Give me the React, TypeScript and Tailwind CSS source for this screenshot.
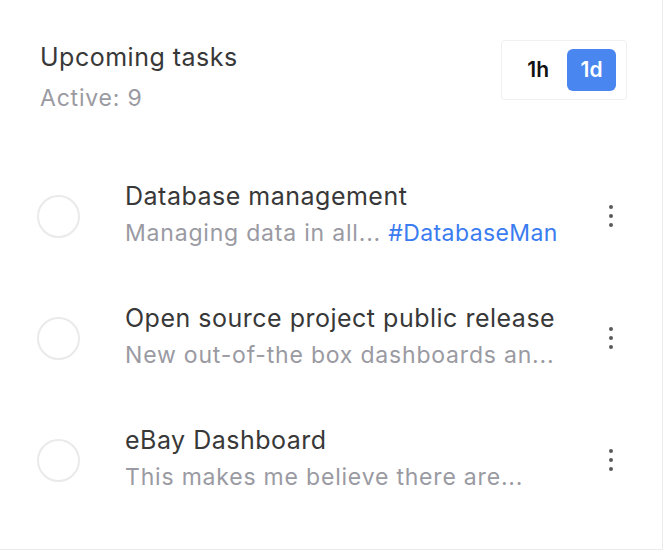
import React from "react";

const tasks = [
  {
    title: "Database management",
    sub: "Managing data in all... ",
    tag: "#DatabaseMan",
  },
  { title: "Open source project public release", sub: "New out-of-the box dashboards an...", tag: "" },
  { title: "eBay Dashboard", sub: "This makes me believe there are...", tag: "" },
];

function Kebab() {
  return (
    <div className="flex flex-col items-center gap-[5px] w-[8px]">
      <span className="block w-[4px] h-[4px] rounded-full bg-[#5a5a5a]" />
      <span className="block w-[4px] h-[4px] rounded-full bg-[#5a5a5a]" />
      <span className="block w-[4px] h-[4px] rounded-full bg-[#5a5a5a]" />
    </div>
  );
}

export default function App() {
  return (
    <div className="w-[666px] h-[554px] bg-white font-['Inter',sans-serif]">
      <div className="w-[663px] h-[550px] bg-white border-r border-b border-[#ececec] flex flex-col">
        <div className="h-[155px] flex items-start justify-between pl-[40px] pr-[35px] pt-[40px]">
          <div className="flex flex-col">
            <div className="text-[25px] leading-[34px] text-[#383838] tracking-[0.5px]">Upcoming tasks</div>
            <div className="text-[23px] leading-[30px] text-[#9a9aa2] tracking-[0.8px] mt-[9px]">Active: 9</div>
          </div>
          <div className="w-[126px] h-[60px] rounded-[4px] border border-[#f0f0f0] flex items-center justify-end pr-[10px] gap-[18px]">
            <span className="text-[21px] font-semibold text-[#111111]">1h</span>
            <span className="w-[49px] h-[42px] rounded-[6px] bg-[#4a86f0] text-white text-[21px] font-semibold flex items-center justify-center">1d</span>
          </div>
        </div>
        {tasks.map((t, i) => (
          <div key={i} className="h-[122px] flex items-center pl-[37px]">
            <div className="w-[43px] h-[43px] rounded-full border-2 border-[#eaeaea] shrink-0" />
            <div className="ml-[45px] w-[444px] mb-[3px] flex flex-col">
              <div className="text-[25px] leading-[30px] text-[#383838] tracking-[0.5px] whitespace-nowrap">{t.title}</div>
              <div className="text-[23px] leading-[30px] text-[#9a9aa2] tracking-[0.8px] whitespace-nowrap mt-[7px]">
                {t.sub}
                {t.tag && <span className="text-[#3b7cf0] tracking-[0.4px]">{t.tag}</span>}
              </div>
            </div>
            <div className="ml-[38px]">
              <Kebab />
            </div>
          </div>
        ))}
      </div>
    </div>
  );
}
